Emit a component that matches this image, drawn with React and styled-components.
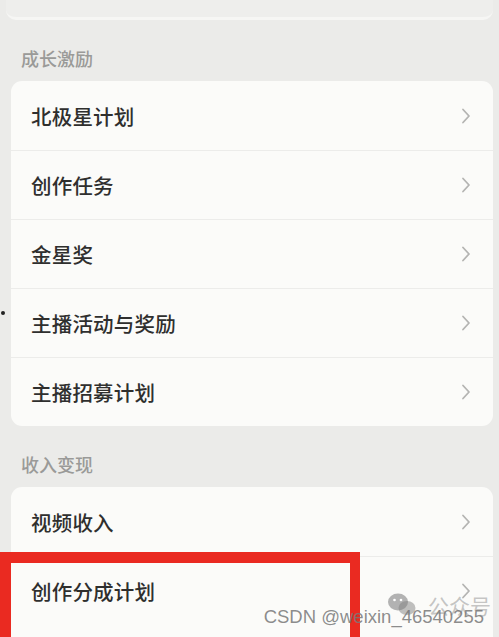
import React from "react";
import styled, { createGlobalStyle } from "styled-components";

const Global = createGlobalStyle`
  html, body { margin: 0; padding: 0; background: #ebebe9; }
  body { font-family: "Noto Sans CJK SC", "Noto Sans", sans-serif; }
  * { box-sizing: border-box; }
`;

const Page = styled.div`
  position: relative;
  width: 499px;
  height: 637px;
  overflow: hidden;
  background: #ebebe9;
`;

const TopBar = styled.div`
  height: 20px;
  margin: 0 6px 0 6px;
  background: #eeeeec;
  border-bottom: 3px solid #f6f6f4;
  border-radius: 0 0 10px 10px;
`;

const SectionHeader = styled.div`
  padding: ${(p) => p.$top}px 0 11px 21px;
  font-size: 18px;
  line-height: 24px;
  color: #9a9a98;
  font-weight: 500;
`;

const Card = styled.div`
  margin: 0 6px 0 11px;
  padding-bottom: ${(p) => p.$extra || 0}px;
  background: #fbfbf9;
  border-radius: 11px;
  overflow: hidden;
`;

const Row = styled.div`
  display: flex;
  align-items: center;
  justify-content: space-between;
  height: 69px;
  padding: 0 22px 0 20px;
  position: relative;
  & + & {
    border-top: 1px solid #ececea;
  }
`;

const Label = styled.span`
  font-size: 20.5px;
  font-weight: 500;
  color: #2f2f2e;
  letter-spacing: 0.2px;
`;

const Chevron = () => (
  <svg width="10" height="16" viewBox="0 0 10 16" fill="none">
    <path d="M2 1.5 L8 8 L2 14.5" stroke="#b4b4b2" strokeWidth="1.8" strokeLinecap="round" strokeLinejoin="round" />
  </svg>
);

const Dot = styled.div`
  position: absolute;
  left: 1px;
  top: 311px;
  width: 4px;
  height: 4px;
  border-radius: 50%;
  background: #222;
`;

const Highlight = styled.div`
  position: absolute;
  left: 0;
  top: 552px;
  width: 360px;
  height: 110px;
  border: 11px solid #ea2a21;
  border-right-width: 10px;
`;

const Watermark = styled.div`
  position: absolute;
  right: 15px;
  top: 606px;
  font-family: "Liberation Sans", Arial, sans-serif;
  font-size: 18.5px;
  color: rgba(120, 120, 120, 0.85);
  white-space: nowrap;
`;

const Official = styled.div`
  position: absolute;
  left: 388px;
  top: 590px;
  display: flex;
  align-items: center;
  gap: 12px;
  color: rgba(150, 150, 150, 0.55);
  font-size: 21px;
`;

const WeChatLogo = () => (
  <svg width="28" height="24" viewBox="0 0 28 24">
    <ellipse cx="10" cy="9" rx="10" ry="8.5" fill="rgba(130,130,130,0.6)" />
    <ellipse cx="19" cy="15" rx="8.5" ry="7" fill="rgba(130,130,130,0.5)" />
    <circle cx="6.5" cy="7" r="1.3" fill="#fff" />
    <circle cx="13" cy="7" r="1.3" fill="#fff" />
  </svg>
);

const growth = ["北极星计划", "创作任务", "金星奖", "主播活动与奖励", "主播招募计划"];
const income = ["视频收入", "创作分成计划"];

export default function App() {
  return (
    <Page>
      <Global />
      <TopBar />
      <SectionHeader $top={26}>成长激励</SectionHeader>
      <Card>
        {growth.map((t) => (
          <Row key={t}>
            <Label>{t}</Label>
            <Chevron />
          </Row>
        ))}
      </Card>
      <SectionHeader $top={26}>收入变现</SectionHeader>
      <Card $extra={40}>
        {income.map((t) => (
          <Row key={t}>
            <Label>{t}</Label>
            <Chevron />
          </Row>
        ))}
      </Card>
      <Dot />
      <Highlight />
      <Official>
        <WeChatLogo />
        <span>公众号</span>
      </Official>
      <Watermark>CSDN @weixin_46540255</Watermark>
    </Page>
  );
}
